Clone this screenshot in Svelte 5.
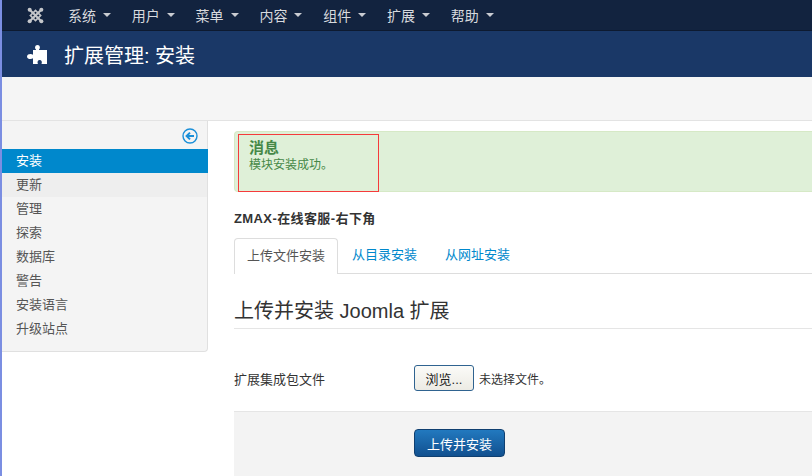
<script>
  const menus = ['系统', '用户', '菜单', '内容', '组件', '扩展', '帮助'];
  const side = ['安装', '更新', '管理', '探索', '数据库', '警告', '安装语言', '升级站点'];
  const tabs = ['上传文件安装', '从目录安装', '从网址安装'];
</script>

<div class="page">
  <div class="strip"></div>
  <div class="main">
    <nav class="nav">
      <svg class="logo" viewBox="0 0 16 16" width="17" height="17" aria-hidden="true">
        <g fill="none" stroke="#c4c6ca">
          <path d="M3 3 L13 13 M13 3 L3 13" stroke-width="2" />
          <path d="M3.2 8 L8 3.2 L12.8 8 L8 12.8 Z" stroke-width="1.6" />
        </g>
        <circle cx="2.5" cy="2.5" r="1.9" fill="#c4c6ca" />
        <circle cx="13.5" cy="2.5" r="1.9" fill="#c4c6ca" />
        <circle cx="2.5" cy="13.5" r="1.9" fill="#c4c6ca" />
        <circle cx="13.5" cy="13.5" r="1.9" fill="#c4c6ca" />
      </svg>
      <ul class="menu">
        {#each menus as m}
          <li>{m}<span class="caret"></span></li>
        {/each}
      </ul>
    </nav>
    <header class="head">
      <svg class="puzzle" viewBox="0 0 20 20" width="20" height="20" aria-hidden="true">
        <path fill="#fff" d="M9 5.5 C7.6 4.6 7.6 1 10.5 1 C13.4 1 13.4 4.6 12 5.5 L12 6 L20 6 L20 20 L14.5 20 C15.4 18 14.6 16 12.7 16 C10.8 16 10 18 10.9 20 L6 20 L6 14.3 C4.5 15.6 0 15.4 0 12.5 C0 9.6 4.5 9.4 6 10.7 L6 6 L9 6 Z" />
      </svg>
      <h1>扩展管理: 安装</h1>
    </header>
    <div class="subhead"></div>
    <div class="body">
      <aside class="sidebar">
        <div class="toggle">
          <svg viewBox="0 0 16 16" width="16" height="16" aria-hidden="true">
            <circle cx="8" cy="8" r="7" fill="none" stroke="#1a8fd8" stroke-width="1.4" />
            <path d="M12 8 H5 M8 4.6 L4.6 8 L8 11.4" fill="none" stroke="#1a8fd8" stroke-width="2" />
          </svg>
        </div>
        <ul class="sidelist">
          {#each side as s, i}
            <li class:active={i === 0} class:hover={i === 1}>{s}</li>
          {/each}
        </ul>
      </aside>
      <section class="content">
        <div class="alert">
          <div class="msgbox">
            <h4>消息</h4>
            <p>模块安装成功。</p>
          </div>
        </div>
        <div class="name">ZMAX-在线客服-右下角</div>
        <ul class="tabs">
          {#each tabs as t, i}
            <li class:current={i === 0}>{t}</li>
          {/each}
        </ul>
        <h2>上传并安装 Joomla 扩展</h2>
        <div class="row">
          <span class="label">扩展集成包文件</span>
          <button class="browse">浏览...</button>
          <span class="nofile">未选择文件。</span>
        </div>
        <div class="actions">
          <button class="submit">上传并安装</button>
        </div>
      </section>
    </div>
  </div>
</div>

<style>
  :global(body) {
    margin: 0;
    background: #fff;
    overflow: hidden;
  }
  .page {
    display: flex;
    width: 812px;
    height: 476px;
    overflow: hidden;
    font-family: "Liberation Sans", "Noto Sans CJK SC", sans-serif;
    font-size: 13px;
    color: #333;
  }
  .strip {
    flex: 0 0 2px;
    background: #7b8ee2;
  }
  .main {
    flex: 1;
    min-width: 0;
    display: flex;
    flex-direction: column;
  }
  .nav {
    height: 31px;
    box-sizing: border-box;
    background: #12233f;
    border-bottom: 1px solid #0d1a30;
    display: flex;
    align-items: center;
    padding-left: 25px;
  }
  .logo {
    flex: none;
  }
  .menu {
    display: flex;
    list-style: none;
    margin: 0 0 0 24px;
    padding: 0;
    gap: 20.8px;
    color: #d8dade;
    font-size: 14px;
  }
  .menu li {
    display: flex;
    align-items: center;
    white-space: nowrap;
  }
  .caret {
    width: 0;
    height: 0;
    margin-left: 7px;
    border-left: 4px solid transparent;
    border-right: 4px solid transparent;
    border-top: 4px solid #c9ccd2;
  }
  .head {
    height: 46px;
    background: #1a3867;
    display: flex;
    align-items: center;
    padding-left: 25px;
    gap: 17px;
  }
  .head h1 {
    margin: 0;
    font-size: 20px;
    font-weight: 400;
    color: #fff;
  }
  .subhead {
    height: 44px;
    box-sizing: border-box;
    background: #f5f5f5;
    border-bottom: 1px solid #e3e3e3;
  }
  .body {
    flex: 1;
    display: flex;
    min-height: 0;
  }
  .sidebar {
    flex: 0 0 auto;
    align-self: flex-start;
    width: 205px;
    height: 230px;
    background: #f4f4f4;
    border-right: 1px solid #e0e0e0;
    border-bottom: 1px solid #e0e0e0;
    border-bottom-right-radius: 4px;
  }
  .toggle {
    height: 28px;
    display: flex;
    justify-content: flex-end;
    align-items: center;
    padding-right: 9px;
    padding-top: 2px;
    box-sizing: border-box;
  }
  .sidelist {
    list-style: none;
    margin: 0;
    padding: 0;
  }
  .sidelist li {
    height: 24px;
    line-height: 24px;
    padding-left: 14px;
    color: #555;
  }
  .sidelist li.active {
    background: #0088cc;
    color: #fff;
    margin-right: -1px;
  }
  .sidelist li.hover {
    background: #eeeeee;
  }
  .content {
    flex: 1;
    min-width: 0;
    margin-left: 26px;
  }
  .alert {
    margin-top: 10px;
    height: 61px;
    background: #dff0d8;
    border: 1px solid #d6e9c6;
    border-right: 0;
    border-radius: 4px 0 0 4px;
    box-sizing: border-box;
    padding: 2px 0 0 3px;
  }
  .msgbox {
    width: 141px;
    height: 58px;
    box-sizing: border-box;
    border: 1px solid #f53b3b;
    color: #468847;
    padding: 5px 0 0 10px;
  }
  .msgbox h4 {
    margin: 0;
    font-size: 15px;
    line-height: 16px;
    font-weight: 700;
  }
  .msgbox p {
    margin: 1px 0 0;
    line-height: 16px;
    font-size: 12px;
  }
  .name {
    margin-top: 19px;
    font-size: 13px;
    font-weight: 700;
    line-height: 16px;
    letter-spacing: 0.4px;
    color: #333;
  }
  .tabs {
    display: flex;
    list-style: none;
    margin: 11px 0 0;
    padding: 0;
    height: 36px;
    box-sizing: border-box;
    border-bottom: 1px solid #ddd;
  }
  .tabs li {
    height: 35px;
    line-height: 34px;
    padding: 0 14px;
    color: #0088cc;
  }
  .tabs li.current {
    color: #555;
    background: #fff;
    border: 1px solid #ddd;
    border-bottom: 0;
    border-radius: 4px 4px 0 0;
    padding: 0 12px;
    line-height: 33px;
  }
  h2 {
    margin: 24px 0 0;
    font-size: 20px;
    font-weight: 400;
    line-height: 27px;
    padding-bottom: 3px;
    border-bottom: 1px solid #e5e5e5;
    color: #333;
  }
  .row {
    display: flex;
    align-items: center;
    margin-top: 36px;
    height: 26px;
  }
  .label {
    flex: 0 0 180px;
  }
  .browse {
    width: 60px;
    height: 26px;
    padding: 0;
    font: inherit;
    color: #222;
    background: linear-gradient(#fbfbf8, #ecebe4);
    border: 1px solid #2f6390;
    border-radius: 3px;
  }
  .nofile {
    margin-left: 5px;
    font-size: 12px;
  }
  .actions {
    margin-top: 20px;
    height: 70px;
    background: #f3f3f3;
    border-top: 1px solid #e5e5e5;
    box-sizing: border-box;
    padding: 17px 0 0 180px;
  }
  .submit {
    width: 91px;
    height: 28px;
    padding: 0;
    font: inherit;
    color: #fff;
    background: linear-gradient(#2279bf, #11508f);
    border: 1px solid #0f3f70;
    border-radius: 4px;
  }
</style>
